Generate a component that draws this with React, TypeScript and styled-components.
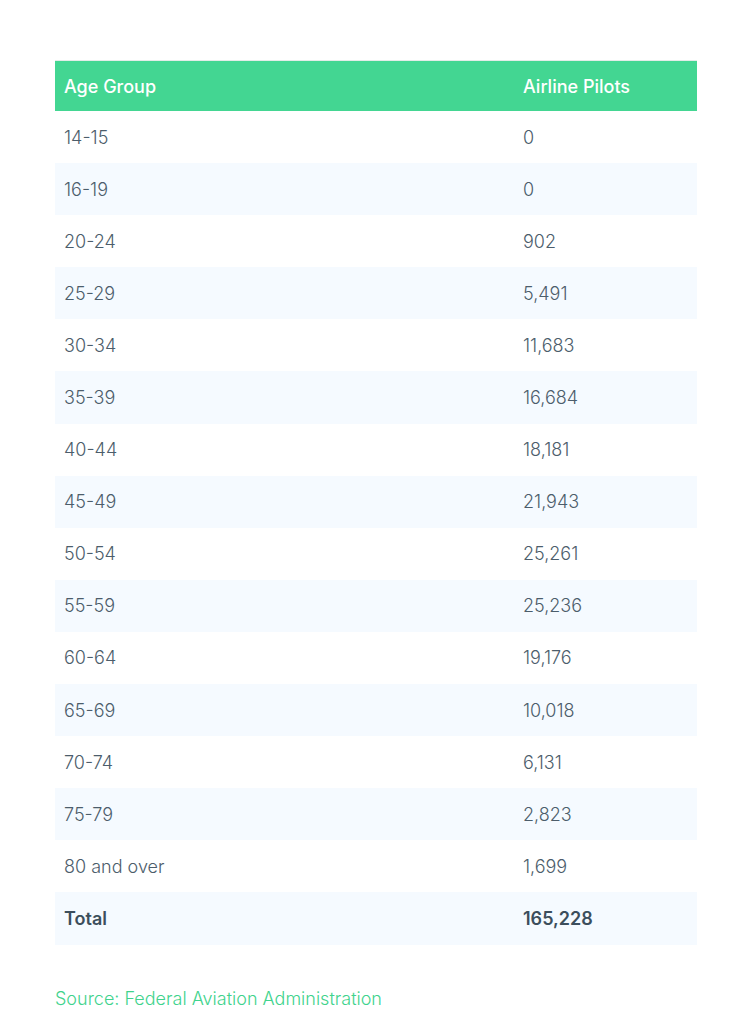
import styled, { createGlobalStyle } from 'styled-components';

const rows: [string, string][] = [
  ['14-15', '0'],
  ['16-19', '0'],
  ['20-24', '902'],
  ['25-29', '5,491'],
  ['30-34', '11,683'],
  ['35-39', '16,684'],
  ['40-44', '18,181'],
  ['45-49', '21,943'],
  ['50-54', '25,261'],
  ['55-59', '25,236'],
  ['60-64', '19,176'],
  ['65-69', '10,018'],
  ['70-74', '6,131'],
  ['75-79', '2,823'],
  ['80 and over', '1,699'],
];

const GlobalStyle = createGlobalStyle`
  body {
    margin: 0;
    background: #ffffff;
    font-family: Inter, "Open Sans", sans-serif;
  }
`;

const App = () => {
  return (
    <>
      <GlobalStyle />
      <Page>
        <Table>
          <Header>
            <Cell>Age Group</Cell>
            <Cell>Airline Pilots</Cell>
          </Header>
          {rows.map(([age, count], i) => (
            <Row key={age} $striped={i % 2 === 1}>
              <Cell>{age}</Cell>
              <Cell>{count}</Cell>
            </Row>
          ))}
          <Row $striped $bold>
            <Cell>Total</Cell>
            <Cell>165,228</Cell>
          </Row>
        </Table>
        <Source>Source: Federal Aviation Administration</Source>
      </Page>
    </>
  );
};

export default App;

const Page = styled.div`
  padding: 60px 59px 0 55px;
  height: 1024px;
  box-sizing: border-box;
`;

const Table = styled.div`
  display: flex;
  flex-direction: column;
  border-top: 1px solid #e4ece8;
`;

const Header = styled.div`
  display: grid;
  grid-template-columns: 459px 1fr;
  height: 50px;
  align-items: center;
  background: #43d692;
  color: #ffffff;
  font-size: 18px;
  font-weight: 500;
`;

const Row = styled.div<{ $striped?: boolean; $bold?: boolean }>`
  display: grid;
  grid-template-columns: 459px 1fr;
  height: 52.1px;
  align-items: center;
  background: ${(p) => (p.$striped ? '#f5faff' : '#ffffff')};
  color: ${(p) => (p.$bold ? '#3c4e5c' : '#4c5d6b')};
  font-size: 18px;
  font-weight: ${(p) => (p.$bold ? 600 : 300)};
`;

const Cell = styled.div`
  padding-left: 9px;
`;

const Source = styled.div`
  margin-top: 43px;
  color: #3fd38d;
  font-size: 18px;
  font-weight: 300;
`;
